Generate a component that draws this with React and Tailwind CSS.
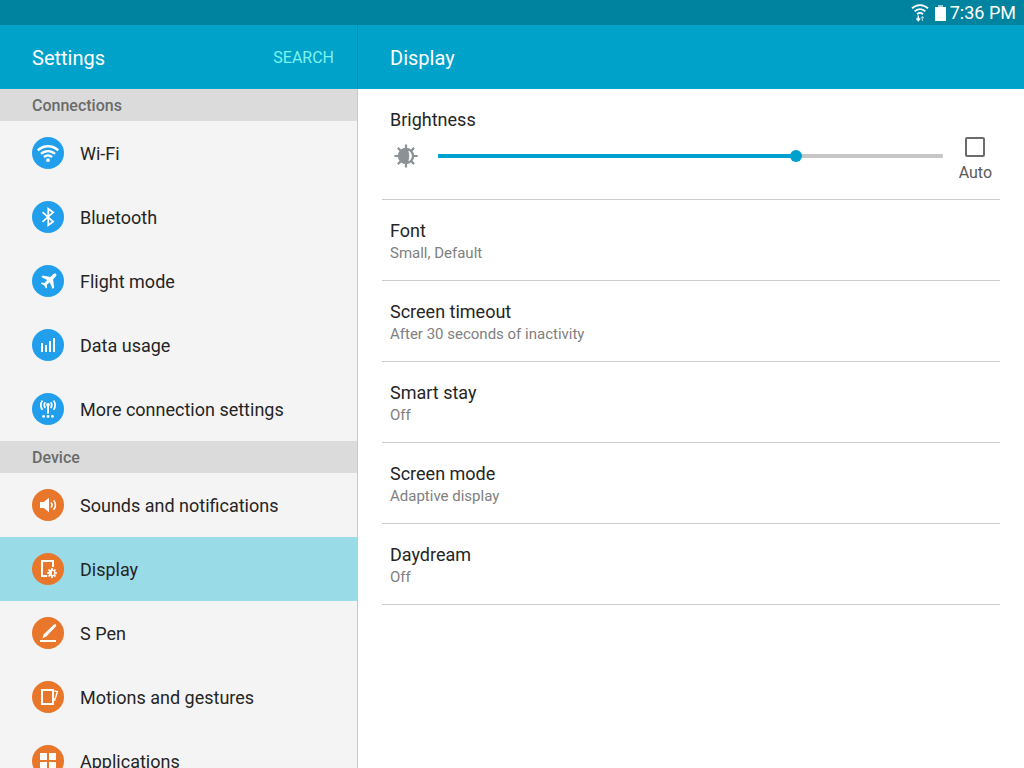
import React, { useState } from "react";

const WifiIcon = () => (
    <svg viewBox="0 0 32 32" className="size-8" fill="none" stroke="white" strokeWidth="2.3">
        <path d="M5.8 13.4a14.6 14.6 0 0 1 20.4 0" />
        <path d="M9 16.9a10 10 0 0 1 14 0" />
        <path d="M12 20.1a5.8 5.8 0 0 1 8 0" />
        <circle cx="16" cy="23.2" r="1.9" fill="white" stroke="none" />
    </svg>
);

const BluetoothIcon = () => (
    <svg viewBox="0 0 32 32" className="size-8" fill="none" stroke="white" strokeWidth="1.8">
        <path d="M10.5 11.2l10.6 9.4-4.8 3.6V7.8l4.8 3.6-10.6 9.4" />
    </svg>
);

const FlightIcon = () => (
    <svg viewBox="0 0 32 32" className="size-8" fill="white">
        <path d="M24.1 8.9c-.8-.7-2.2-.2-3.4.9l-2.3 2.2-7.7-1.5-1.4 1.4 5.9 3.2-2.7 2.8-2.7-.4-1.1 1.1 3.4 1.7 1.9 3.3 1.1-1.1-.3-2.7 2.9-2.6 2.9 6.9 1.5-1.5-1-8.3 2.2-2.3c1.1-1.2 1.5-2.4.8-3.1z" />
    </svg>
);

const DataIcon = () => (
    <svg viewBox="0 0 32 32" className="size-8" fill="white">
        <path d="M9 14h2v9H9zM13 16h2v7h-2zM17 12h2v11h-2zM21 9h2v14h-2z" />
    </svg>
);

const AntennaIcon = () => (
    <svg viewBox="0 0 32 32" className="size-8" fill="none" stroke="white" strokeWidth="1.7">
        <path d="M10.4 7.4a8.3 8.3 0 0 0 0 9.4M21.6 7.4a8.3 8.3 0 0 1 0 9.4" />
        <path d="M13.2 9.2a5 5 0 0 0 0 5.8M18.8 9.2a5 5 0 0 1 0 5.8" />
        <path d="M16 12v8.4" strokeWidth="2" />
        <circle cx="16" cy="11.8" r="1.8" fill="white" stroke="none" />
        <g fill="white" stroke="none">
            <circle cx="11.6" cy="23.4" r="1.4" />
            <circle cx="16" cy="23.4" r="1.4" />
            <circle cx="20.4" cy="23.4" r="1.4" />
        </g>
    </svg>
);

const SoundIcon = () => (
    <svg viewBox="0 0 32 32" className="size-8" fill="none" stroke="white" strokeWidth="1.5">
        <path d="M8 13h3.8l5.2-4.2v14.4L11.8 19H8z" fill="white" stroke="none" />
        <path d="M19 13.4a4 4 0 0 1 0 5.2M21.6 11.2a7.2 7.2 0 0 1 0 9.6" />
    </svg>
);

const DisplayIcon = () => (
    <svg viewBox="0 0 32 32" className="size-8" fill="none" stroke="white">
        <path d="M15.2 23H10V8h11v6" strokeWidth="2" />
        <circle cx="20" cy="20" r="2.9" strokeWidth="1.2" />
        <path d="M20 17.1a2.9 2.9 0 0 0 0 5.8z" fill="white" stroke="none" />
        <path
            d="M20 15v2M20 23v2M15 20h2M23 20h2M16.5 16.5l1.4 1.4M22.1 22.1l1.4 1.4M16.5 23.5l1.4-1.4M22.1 17.9l1.4-1.4"
            strokeWidth="1.7"
        />
    </svg>
);

const PenIcon = () => (
    <svg viewBox="0 0 32 32" className="size-8" fill="white">
        <path d="M8 23h16v2H8z" />
        <path d="M10.3 21.4l1.5-4.1L21.4 8c.9-.8 2.2-.9 2.7-.3.3.4.2 1.2-.5 2l-9.3 9.7z" />
    </svg>
);

const MotionIcon = () => (
    <svg viewBox="0 0 32 32" className="size-8" fill="none" stroke="white">
        <path d="M10 9h11v14H10z" strokeWidth="2" />
        <path d="M22.4 9.9l3 .9-2.9 9" strokeWidth="1.4" />
    </svg>
);

const AppsIcon = () => (
    <svg viewBox="0 0 32 32" className="size-8" fill="white">
        <path d="M8 8h7v7H8zM17 8h7v7h-7zM8 17h7v7H8zM17 17h7v7h-7z" />
    </svg>
);

const BrightnessIcon = () => (
    <svg viewBox="0 0 24 24" className="size-6 shrink-0" fill="none" stroke="#8b9194">
        <path
            d="M12 .4v4M12 19.6v4M.4 12h4M19.6 12h4M3.9 3.9l2.8 2.8M17.3 17.3l2.8 2.8M3.9 20.1l2.8-2.8M17.3 6.7l2.8-2.8"
            strokeWidth="2.2"
        />
        <circle cx="12" cy="12" r="8.2" fill="#8b9194" stroke="none" />
        <path d="M14.8 7a5.9 5.9 0 0 1 0 10c.9-3.3.9-6.7 0-10z" fill="white" stroke="white" strokeWidth=".6" />
    </svg>
);

const sections = [
    {
        title: "Connections",
        color: "bg-[#219fec]",
        items: [
            { label: "Wi-Fi", icon: WifiIcon },
            { label: "Bluetooth", icon: BluetoothIcon },
            { label: "Flight mode", icon: FlightIcon },
            { label: "Data usage", icon: DataIcon },
            { label: "More connection settings", icon: AntennaIcon },
        ],
    },
    {
        title: "Device",
        color: "bg-[#e8762b]",
        items: [
            { label: "Sounds and notifications", icon: SoundIcon },
            { label: "Display", icon: DisplayIcon },
            { label: "S Pen", icon: PenIcon },
            { label: "Motions and gestures", icon: MotionIcon },
            { label: "Applications", icon: AppsIcon },
        ],
    },
];

const options = [
    { title: "Font", value: "Small, Default" },
    { title: "Screen timeout", value: "After 30 seconds of inactivity" },
    { title: "Smart stay", value: "Off" },
    { title: "Screen mode", value: "Adaptive display" },
    { title: "Daydream", value: "Off" },
];

const StatusBar = () => (
    <div className="flex h-[25px] shrink-0 items-center justify-end gap-1 bg-[#00839e] pr-2 text-white">
        <svg viewBox="0 0 18 18" className="mr-0.5 size-[18px]" fill="none" stroke="white" strokeWidth="1.9">
            <path d="M1 4.4a11.4 11.4 0 0 1 16 0M3.6 7.4a7.6 7.6 0 0 1 10.8 0M6.1 10.2a4.2 4.2 0 0 1 5.8 0" />
            <path d="M7.3 11.5v5M5.5 14.4l1.8 2.1 1.8-2.1" strokeWidth="1.5" />
            <path d="M11.4 17v-4.4M10 14.2l1.4-1.7 1.4 1.7" stroke="#9fd0da" strokeWidth="1.1" />
        </svg>
        <svg viewBox="0 0 11 16" className="h-4 w-[11px]">
            <path d="M3 0h5v2H3z" fill="#9fd0da" />
            <path d="M0 2h11v14H0z" fill="white" />
        </svg>
        <span className="text-lg leading-6">7:36 PM</span>
    </div>
);

const Sidebar = ({ selected, onSelect }) => (
    <aside className="flex w-[358px] shrink-0 flex-col">
        <header className="flex h-16 shrink-0 items-center justify-between bg-[#00a2ca] pt-0.5 pr-6 pl-8 shadow-[inset_-1px_0_#008fb3]">
            <h1 className="text-xl text-white">Settings</h1>
            <button className="text-base text-[#7df3ee]">SEARCH</button>
        </header>
        <nav className="min-h-0 flex-1 overflow-y-auto border-r border-[#c8c8c8] bg-[#f4f4f4] [scrollbar-width:none]">
            {sections.map((section) => (
                <section key={section.title}>
                    <h2 className="flex h-8 items-center bg-[#dbdbdb] pt-0.5 pl-8 text-base font-medium text-[#6a6a6a]">
                        {section.title}
                    </h2>
                    {section.items.map(({ label, icon: Icon }) => (
                        <button
                            key={label}
                            onClick={() => onSelect(label)}
                            className={`flex h-16 w-full items-center gap-4 pl-8 text-left text-lg text-[#252525] ${
                                selected === label ? "bg-[#99dbe7]" : ""
                            }`}
                        >
                            <span className={`size-8 rounded-full ${section.color}`}>
                                <Icon />
                            </span>
                            <span className="pt-0.5">{label}</span>
                        </button>
                    ))}
                </section>
            ))}
        </nav>
    </aside>
);

const Brightness = () => {
    const [level, setLevel] = useState(714);
    const [auto, setAuto] = useState(false);
    const percent = level / 10;

    return (
        <div className="border-b border-[#cccccc] px-2 pt-[17px] pb-[14px]">
            <label htmlFor="brightness" className="block h-7 text-lg text-[#252525]">
                Brightness
            </label>
            <div className="flex items-start">
                <div className="flex h-11 flex-1 items-center gap-5 pl-1">
                    <BrightnessIcon />
                    <input
                        id="brightness"
                        type="range"
                        min="0"
                        max="1000"
                        value={level}
                        onChange={(e) => setLevel(Number(e.target.value))}
                        style={{
                            backgroundImage: `linear-gradient(to right, #00a0cf ${percent}%, #c6c6c6 ${percent}%)`,
                        }}
                        className="h-3 min-w-0 flex-1 appearance-none bg-[length:100%_4px] bg-center bg-no-repeat [&::-webkit-slider-thumb]:size-3 [&::-webkit-slider-thumb]:appearance-none [&::-webkit-slider-thumb]:rounded-full [&::-webkit-slider-thumb]:bg-[#00a0cf]"
                    />
                </div>
                <label className="flex shrink-0 flex-col items-center gap-1 pt-[3px] pl-4 text-base text-[#5a5a5a]">
                    <input
                        type="checkbox"
                        checked={auto}
                        onChange={(e) => setAuto(e.target.checked)}
                        className="size-5 appearance-none rounded-xs border-2 border-[#6b6b6b] checked:bg-[#00a0cf]"
                    />
                    Auto
                </label>
            </div>
        </div>
    );
};

const App = () => {
    const [selected, setSelected] = useState("Display");

    return (
        <div className="flex h-screen flex-col overflow-hidden bg-white font-[Roboto,sans-serif]">
            <StatusBar />
            <div className="flex min-h-0 flex-1">
                <Sidebar selected={selected} onSelect={setSelected} />
                <main className="flex min-w-0 flex-1 flex-col">
                    <header className="flex h-16 shrink-0 items-center bg-[#00a2ca] px-8 pt-0.5">
                        <h1 className="text-xl text-white">Display</h1>
                    </header>
                    <div className="px-6">
                        <Brightness />
                        {options.map((option) => (
                            <button
                                key={option.title}
                                className="flex h-[81px] w-full flex-col justify-center border-b border-[#cccccc] px-2 pt-0.5 text-left"
                            >
                                <span className="text-lg leading-6 text-[#252525]">{option.title}</span>
                                <span className="text-[15px] leading-5 text-[#808080]">{option.value}</span>
                            </button>
                        ))}
                    </div>
                </main>
            </div>
        </div>
    );
};

export default App;
